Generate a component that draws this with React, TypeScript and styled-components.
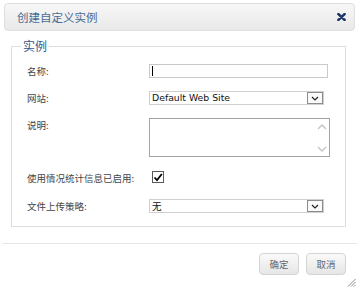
import React from "react";
import styled, { createGlobalStyle } from "styled-components";

const GlobalStyle = createGlobalStyle`
  html, body {
    margin: 0;
    padding: 0;
    background: #fff;
  }
  * { box-sizing: border-box; }
`;

const cjk = `"Noto Sans CJK SC", "Noto Sans", sans-serif`;

const Dialog = styled.div`
  position: relative;
  width: 358px;
  height: 288px;
  background: #fff;
  display: flex;
  flex-direction: column;
  font-family: ${cjk};
`;

const TitleBar = styled.div`
  margin: 3px 3px 0 4px;
  height: 28px;
  padding: 0 8px 0 12px;
  border: 1px solid #dedede;
  border-radius: 4px;
  background: linear-gradient(#f7f7f7, #e9e9e9);
  display: flex;
  align-items: center;
  justify-content: space-between;
`;

const Title = styled.span`
  font-size: 11.5px;
  line-height: 14px;
  color: #4a6c92;
`;

const Fieldset = styled.fieldset`
  margin: 7px 12px 0 11px;
  padding: 10px 15px 13px 15px;
  border: 1px solid #dedede;
  min-width: 0;
`;

const Legend = styled.legend`
  margin-left: -6px;
  padding: 0 2px;
  font-size: 12px;
  line-height: 16px;
  color: #33578a;
`;

const FormGrid = styled.div`
  display: grid;
  grid-template-columns: 122px 1fr;
  row-gap: 13px;
  align-items: center;
`;

const Label = styled.label<{ $top?: boolean }>`
  font-size: 9.5px;
  line-height: 14px;
  color: #444;
  white-space: nowrap;
  align-self: ${(p) => (p.$top ? "start" : "center")};
`;

const TextBox = styled.div`
  position: relative;
  width: 179px;
  height: 14px;
  border: 1px solid #c9c9c9;
  background: #fff;
`;

const Caret = styled.span`
  position: absolute;
  left: 2px;
  top: 1px;
  width: 1px;
  height: 10px;
  background: #000;
`;

const SelectBox = styled.div`
  width: 175px;
  height: 14px;
  border: 1px solid #cfcfcf;
  background: #fff;
  display: flex;
  align-items: center;
  justify-content: space-between;
`;

const SelectValue = styled.span<{ $latin?: boolean }>`
  padding-left: 2px;
  font-family: ${(p) => (p.$latin ? `"DejaVu Sans", Verdana, sans-serif` : cjk)};
  font-size: ${(p) => (p.$latin ? "9.3px" : "9.5px")};
  line-height: 12px;
  color: #111;
`;

const DropButton = styled.span`
  width: 16px;
  height: 12px;
  border: 1px solid #8c8c8c;
  background: #fafafa;
  display: flex;
  align-items: center;
  justify-content: center;
`;

const AreaBox = styled.div`
  width: 181px;
  height: 39px;
  border: 1px solid #a3a3a3;
  background: #fff;
  display: flex;
`;

const AreaInput = styled.textarea`
  flex: 1;
  border: none;
  outline: none;
  resize: none;
  padding: 2px;
  font-family: ${cjk};
  font-size: 9.5px;
`;

const ScrollTrack = styled.div`
  width: 15px;
  display: flex;
  flex-direction: column;
  justify-content: space-between;
  align-items: center;
  padding: 4px 0 3px;
`;

const CheckCell = styled.div`
  height: 16px;
  display: flex;
  align-items: flex-start;
  padding: 1px 0 0 3px;
`;

const CheckBox = styled.span`
  width: 12px;
  height: 12px;
  border: 1px solid #5a5a5a;
  background: #fff;
  display: flex;
  align-items: center;
  justify-content: center;
`;

const Separator = styled.div`
  margin: 16px 1px 0 2px;
  height: 1px;
  background: #e6e6e6;
`;

const ButtonRow = styled.div`
  display: flex;
  justify-content: flex-end;
  gap: 7px;
  padding: 9px 12px 0;
`;

const Button = styled.button`
  width: 40px;
  height: 22px;
  padding: 0;
  border: 1px solid #d4d4d4;
  border-radius: 4px;
  background: linear-gradient(#fafafa, #e6e6e6);
  font-family: ${cjk};
  font-size: 9.5px;
  color: #666;
  cursor: pointer;
`;

const Grip = styled.svg`
  position: absolute;
  right: 2px;
  bottom: 1px;
`;

const Chevron = ({ up, color }: { up?: boolean; color: string }) => (
  <svg width="10" height="7" viewBox="0 0 10 7">
    <path
      d={up ? "M1 6 L5 2 L9 6" : "M1 1 L5 5 L9 1"}
      fill="none"
      stroke={color}
      strokeWidth="1.4"
    />
  </svg>
);

const Select = ({ value, latin }: { value: string; latin?: boolean }) => (
  <SelectBox>
    <SelectValue $latin={latin}>{value}</SelectValue>
    <DropButton>
      <svg width="8" height="5" viewBox="0 0 8 5">
        <path d="M1 1 L4 4 L7 1" fill="none" stroke="#222" strokeWidth="1.2" />
      </svg>
    </DropButton>
  </SelectBox>
);

export default function App() {
  return (
    <>
      <GlobalStyle />
      <Dialog>
        <TitleBar>
          <Title>创建自定义实例</Title>
          <svg width="9" height="8" viewBox="0 0 9 8">
            <path d="M1.3 1 L7.7 7 M7.7 1 L1.3 7" stroke="#1d3766" strokeWidth="2.4" strokeLinecap="round" />
          </svg>
        </TitleBar>

        <Fieldset>
          <Legend>实例</Legend>
          <FormGrid>
            <Label>名称:</Label>
            <TextBox>
              <Caret />
            </TextBox>

            <Label>网站:</Label>
            <Select value="Default Web Site" latin />

            <Label $top>说明:</Label>
            <AreaBox>
              <AreaInput />
              <ScrollTrack>
                <Chevron up color="#c4c4c4" />
                <Chevron color="#c4c4c4" />
              </ScrollTrack>
            </AreaBox>

            <Label>使用情况统计信息已启用:</Label>
            <CheckCell>
              <CheckBox>
                <svg width="10" height="9" viewBox="0 0 10 9">
                  <path d="M1.5 4.5 L4 7.2 L8.8 1" fill="none" stroke="#000" strokeWidth="1.8" />
                </svg>
              </CheckBox>
            </CheckCell>

            <Label>文件上传策略:</Label>
            <Select value="无" />
          </FormGrid>
        </Fieldset>

        <Separator />
        <ButtonRow>
          <Button>确定</Button>
          <Button>取消</Button>
        </ButtonRow>

        <Grip width="9" height="9" viewBox="0 0 9 9">
          <path d="M8.5 1 L1 8.5 M8.5 4 L4 8.5 M8.5 7 L7 8.5" stroke="#888" strokeWidth="1" />
        </Grip>
      </Dialog>
    </>
  );
}
